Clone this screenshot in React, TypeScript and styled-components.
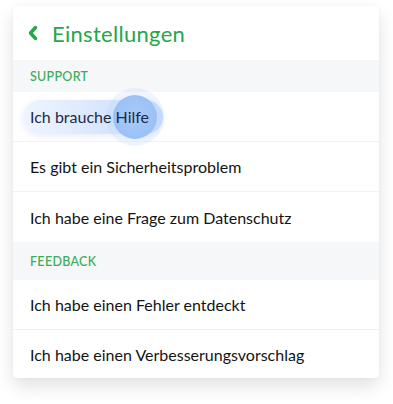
import styled, { createGlobalStyle } from 'styled-components';

const GlobalStyle = createGlobalStyle`
    html, body {
        margin: 0;
        padding: 0;
        background: #ffffff;
    }
    body {
        font-family: Lato, "Noto Sans", "Liberation Sans", sans-serif;
        -webkit-font-smoothing: antialiased;
    }
`;

const Page = styled.div`
    width: 393px;
    height: 404px;
    padding: 6px 14px 0 13px;
    box-sizing: border-box;
`;

const Karte = styled.div`
    background: #fff;
    border-radius: 4px;
    box-shadow: 0 8px 18px rgba(0, 0, 0, 0.12), 0 0 3px rgba(0, 0, 0, 0.04);
    overflow: hidden;
    display: flex;
    flex-direction: column;
`;

const Kopf = styled.div`
    height: 54px;
    display: flex;
    align-items: center;
    gap: 13px;
    padding-left: 14px;
    color: #27a548;
`;

const Titel = styled.div`
    font-size: 22px;
    font-weight: 400;
    letter-spacing: 0.3px;
`;

const Abschnitt = styled.div<{ $hoehe: number }>`
    height: ${({ $hoehe }) => $hoehe}px;
    display: flex;
    align-items: center;
    padding-left: 17px;
    background: #f6f7f8;
    color: #3aab57;
    font-size: 12.5px;
    font-weight: 500;
    letter-spacing: 0.3px;
`;

const Zeile = styled.div<{ $hoehe?: number; $letzte?: boolean }>`
    position: relative;
    height: ${({ $hoehe }) => $hoehe ?? 50}px;
    display: flex;
    align-items: center;
    padding-left: 17px;
    font-size: 16px;
    color: #141414;
    border-bottom: ${({ $letzte }) => ($letzte ? 'none' : '1px solid #f2f2f2')};
    box-sizing: border-box;
`;

const Text = styled.span<{ $aktiv?: boolean }>`
    position: relative;
    z-index: 3;
    color: ${({ $aktiv }) => ($aktiv ? '#1d2a4a' : 'inherit')};
`;

const Pille = styled.div`
    position: absolute;
    left: 10px;
    top: 8px;
    width: 140px;
    height: 34px;
    border-radius: 17px;
    background: linear-gradient(to right, rgba(236, 243, 255, 0.85), rgba(196, 218, 252, 0.95));
    box-shadow: 0 2px 6px rgba(120, 150, 210, 0.18);
    z-index: 1;
`;

const Welle = styled.div`
    position: absolute;
    left: 100px;
    top: 3px;
    width: 44px;
    height: 44px;
    border-radius: 50%;
    background: radial-gradient(circle, #a9cbf8 0%, #94bcf6 100%);
    box-shadow: 0 0 0 7px rgba(180, 208, 250, 0.22);
    z-index: 2;
`;

const Chevron = () => (
    <svg width="12" height="16" viewBox="0 0 12 16">
        <path d="M8.5 2.5 L3.5 8 L8.5 13.5" fill="none" stroke="#27a548" strokeWidth="3.4" strokeLinecap="round" strokeLinejoin="round" />
    </svg>
);

const App = () => {
    return (
        <Page>
            <GlobalStyle />
            <Karte>
                <Kopf>
                    <Chevron />
                    <Titel>Einstellungen</Titel>
                </Kopf>
                <Abschnitt $hoehe={32}>SUPPORT</Abschnitt>
                <Zeile>
                    <Pille />
                    <Welle />
                    <Text $aktiv>Ich brauche Hilfe</Text>
                </Zeile>
                <Zeile>
                    <Text>Es gibt ein Sicherheitsproblem</Text>
                </Zeile>
                <Zeile $letzte>
                    <Text>Ich habe eine Frage zum Datenschutz</Text>
                </Zeile>
                <Abschnitt $hoehe={38}>FEEDBACK</Abschnitt>
                <Zeile>
                    <Text>Ich habe einen Fehler entdeckt</Text>
                </Zeile>
                <Zeile $hoehe={48} $letzte>
                    <Text>Ich habe einen Verbesserungsvorschlag</Text>
                </Zeile>
            </Karte>
        </Page>
    );
};

export default App;
